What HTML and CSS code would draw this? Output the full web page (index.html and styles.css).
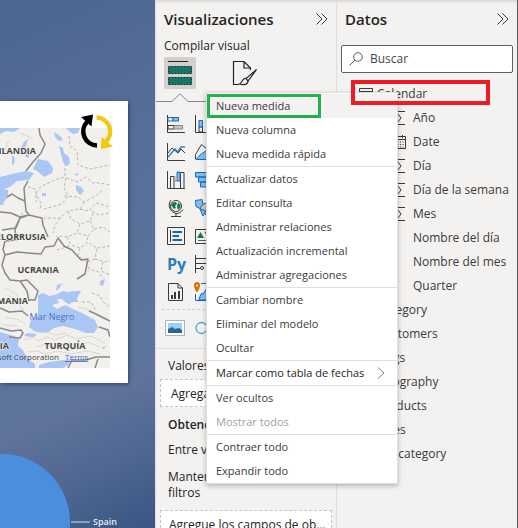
FILE: index.html
```html
<!DOCTYPE html>
<html lang="es">
<head>
<meta charset="utf-8">
<title>Informe</title>
<link rel="stylesheet" href="styles.css">
</head>
<body>
<main class="app">
  <section class="report" aria-label="Lienzo del informe">
    <div class="map-card">
      <svg class="map" viewBox="0 0 110 240" preserveAspectRatio="xMaxYMid slice" role="img" aria-label="Mapa">
        <rect width="110" height="240" fill="#f1f0ed"/>
        <g fill="#a9c6f5">
          <path d="M0 0H20L14 4 6 3 0 6ZM66 0H80L78 5 73 6 69 3Z"/>
          <path d="M24 14l4-3-2 6-3 4-4 2ZM12 27l3 3-1 6-2 1ZM28 22l3 3-3 5-3-2ZM54 4l6 4 3 4-4 1-4-4ZM59 18l4 2 1 5 5 4 1 6-3 3-4-4-2-8ZM38 31l10 2 5 7-1 5-8 4-7-6-4-2ZM0 49l12-3 14-3 8 2-5 7-12 1-7 6-10 3ZM0 60l8 2 0 7-5 6 1 2-4 0ZM75 45l4 1-3 2ZM76 57l5 2 3 4-4 4-4-5ZM42 65l4 0 0 3-4 0ZM20 86l3-1 0 2ZM100 153l5-2-2 7-3-1ZM57 157l7-2-3 2-3 5-2 0Z"/>
          <path d="M38 167l5-2 6 3 6-1 8-4 5 1 8-1 5 0-4 7 1 4-6 0-5 4 4 2 11 5 13 7 3 7-4 6-8 0-11-4-12-3-9 2-7 5-11-1-7-5 2-7 7-5 0-8Z"/>
          <path d="M0 204l14 4 5 3-1 7 5 4 4 8 8 6 0 4H0ZM27 205l10 1-3 3-10-1ZM39 237l10-3 22-3-3 6-5 3-24 0ZM101 220l5-2-2 3Z"/>
        </g>
        <path d="M52 177l7-2-2-4 5 0 3 3 5 3-7 1-6 3Z" fill="#f1f0ed"/>
        <g fill="none" stroke="#d9d7d2" stroke-width="1">
          <path d="M24 212l8-3 6 4 9-4 8 3 12-5 10 4 14-3 14 7M36 219l9-3 9 3 14-4 9 4 11-5 12 5M28 224l9-1 8 3 13-3 12 3 18-3 12 3M5 160l10 5 8 9M10 168l8 6 6 9M5 190l12 1 9 5M3 197l15 1M78 179l12 3 11 8 9 3M28 15l-7 13M9 12l-5 12M20 5l13 6M43 203l12 4 12-2"/>
        </g>
        <g fill="none" stroke="#bbb8b4" stroke-width="1" stroke-dasharray="3 2">
          <path d="M69 8l1 10 7 5 1 14 12 4 10-2 10-2M65 35v14l-10 3-15 7-4 6 0 9M28 59l7 2 2 7 4 7-1 7M66 50l12 4 8-5 7 6 7 0 10 2M66 50l-2 10 4 8-6 8-18 5M64 68l14 1 6 5 10-5 9-7M84 74l-4 7-12 2-8 7-16 0M80 81l9 2 7-8 14 4M60 90l-5 7-2 8M68 83l3 8 9 5 10-3 4-10M80 96l-3 9-10 4-11-1M90 93l4 8-6 7-11-3M94 101l9-2 7 5M67 109l4 8 9 3 7-5 1-7M57 122l6-2 8-3M80 120l-2 8 9 6 8-3 2-11-8-5M87 134l2 7 10 3 4 7M97 120l13-2M95 131l10 3 5-2M103 134l-2 9 9 4M92 165l8 3 4 7 6 4M82 174l9 0 5 9M92 83l7 4 11-2"/>
        </g>
        <g fill="none" stroke="#8b8885" stroke-width="1.5" stroke-linejoin="round">
          <path d="M39 0l1 7 5 9-4 9-8 9-7 9M28 53l-4 7 1 13 1 10 3 4M7 69l5-3 6 4 7 3M0 84l11 1 9 4 9-2 8 2 5 1 1 7 5 12M29 87l-9 3-4 10-14 2M20 90l-5 10 1 12-11 1M5 113l-2 8 2 6 12-3 11 1 13 1 4-7 9-1 4-8 6 8 8 4 9 10 7-1-1 5-2 10-8 5M5 127l-3 10 3 8 5 7 10 1 7-1 6 6 5 5-3 9-6 0M20 153l7 10 2 10M0 180l9 4 13-1 6 5M0 200l11 3 10-1 2 3-3 5-11-1M89 183l7 3 14 7M99 199l9 3 2 7M110 229l-14 0-10 3-14 0-4 8M95 240l3-9"/>
        </g>
        <g class="map-country">
          <text x="36" y="26" text-anchor="end">FINLANDIA</text>
          <text x="46" y="112" text-anchor="end">BIELORRUSIA</text>
          <text x="38" y="145" text-anchor="middle">UCRANIA</text>
          <text x="28" y="176" text-anchor="end">RUMANIA</text>
          <text x="9" y="221" text-anchor="end">GRECIA</text>
          <text x="65" y="221" text-anchor="middle">TURQUÍA</text>
        </g>
        <text class="map-sea" x="52" y="192" text-anchor="middle">Mar Negro</text>
        <text class="map-credit" x="59" y="232" text-anchor="end">© 2023 Microsoft Corporation</text>
        <a href="#terms"><text class="map-terms" x="65" y="232">Terms</text></a>
      </svg>
      <svg class="refresh" viewBox="0 0 36 36" aria-hidden="true">
        <path d="M18 31.500A14 14 0 0 1 8.500 7.500" fill="none" stroke="#000" stroke-width="4.500"/>
        <path d="M2 3L14 .5 12.500 12.500Z" fill="#000"/>
        <path d="M17.500 3.500A14 14 0 0 1 27 27.500" fill="none" stroke="#f2c811" stroke-width="4.500"/>
        <path d="M22.500 23L34 32.500 22 35Z" fill="#f2c811"/>
      </svg>
    </div>
    <figure class="pie">
      <svg class="pie-shape" viewBox="0 0 71 74" aria-hidden="true"><circle cx="2" cy="68" r="68" fill="#4a8edd"/></svg>
      <figcaption class="pie-label">Spain</figcaption>
    </figure>
  </section>

  <section class="panel vis">
    <header class="panel-head">
      <h2>Visualizaciones</h2>
      <button class="icon-btn" aria-label="Contraer visualizaciones"><svg width="12" height="12" viewBox="0 0 12 12"><path d="M.5.5L6 6 .5 11.500M5.500.5L11 6l-5.500 5.500"/></svg></button>
    </header>
    <h3 class="sub">Compilar visual</h3>
    <div class="tabs">
      <button class="tab active" aria-label="Compilar visual">
        <svg width="24" height="24" viewBox="0 0 24 24"><path d="M0 .5H20" stroke="#252423"/><rect x="0.500" y="5.500" width="23" height="7" fill="#117865" stroke="#252423" stroke-dasharray="2 1"/><rect x="0.500" y="16.500" width="23" height="7" fill="#117865" stroke="#252423" stroke-dasharray="2 1"/></svg>
      </button>
      <button class="tab" aria-label="Dar formato">
        <svg width="26" height="26" viewBox="0 0 26 26" fill="none" stroke="#252423" stroke-width="1.200"><path d="M7 24.500H1.500V1.500H12L18.500 8v2M12 1.500V8h6.500"/><path d="M24.500 9.500L14 18.500l2 2.500ZM14 18.500c-4-1-3 4-6.500 5.500 4 1 8.500 1 8.500-3Z"/></svg>
      </button>
    </div>
    <svg class="notch" viewBox="0 0 180 9" preserveAspectRatio="xMinYMid slice" aria-hidden="true"><path d="M0 8.500H16L24 .8 32 8.500H180" fill="none" stroke="#8a8886"/></svg>
    <div class="gallery">
      <button aria-label="Barras apiladas"><svg viewBox="0 0 18 18"><path class="k" d="M.5 0V17.500H18"/><path class="b" d="M1 2.500H6V6H1Z" fill="#fff"/><path class="b f" d="M6 2.500H11.500V6H6Z"/><path class="k" d="M1 10.500H7V14H1Z"/><path d="M7 10.500H15.500V14H7Z" fill="#c8c6c4" stroke="#8a8886"/></svg></button>
      <button aria-label="Columnas apiladas"><svg viewBox="0 0 18 18"><path class="k" d="M.5 0V17.500H18M4 12h3.500v5H4Z"/><path class="b f" d="M4 5.500H7.500V12H4Z"/><path class="b f" d="M12 3.500h3v8h-3Z"/></svg></button>
      <button aria-label="Líneas"><svg viewBox="0 0 18 18"><path class="k" d="M.5 0V17.500H18"/><path d="M1 14L8 6l3 3 3-5h4" stroke="#2b88d8" fill="none" stroke-width="1.500"/><path class="k" d="M1 10L5 5l6 5 3-4 4 4"/></svg></button>
      <button aria-label="Áreas"><svg viewBox="0 0 18 18"><path class="b f" d="M1 16.500L5 12l7-5v9.500Z"/><path class="k" d="M.5 11.500L6.500 1.500 13 7"/><path class="k" d="M.5 11.500V16"/></svg></button>
      <button aria-label="Cascada"><svg viewBox="0 0 18 18"><path class="k" d="M.5 0V17.500H18M3.500 17V5.500H7V17M13.500 17V1.500H17V17"/><path class="b f" d="M10 4.500V1h3V10h-3Z"/><path d="M7 5v5h3V5" fill="#c8c6c4" stroke="#8a8886"/></svg></button>
      <button aria-label="Embudo"><svg viewBox="0 0 18 18"><path class="b f" d="M.5 1.500H17V6H.5ZM3.500 6H15v5H3.500ZM5.500 11H13v5H5.500Z"/></svg></button>
      <button aria-label="Mapa"><svg viewBox="0 0 18 18"><circle cx="9" cy="7" r="5.500" class="k"/><path d="M6 3.500L9 3l1 2-2 2 1 2-2 1-3-4ZM11 3.500l2.500 2v3L11 11l-1-3Z" fill="#107c41"/><path class="k" d="M4 1C0 6 3 13 9 14.500c3 0 5-1 7-4M9 14.500V17M4 17.500H14"/></svg></button>
      <button aria-label="Mapa coroplético"><svg viewBox="0 0 18 18"><path class="b f" d="M.5 1.500L7 .5l1 5-3 4-4-2Z"/><path d="M8 5l8-2v8l-5 5-6-7Z" fill="#c8c6c4" stroke="#605e5c"/><path class="b f" d="M5 10l6 2-3 5Z"/></svg></button>
      <button aria-label="Segmentación"><svg viewBox="0 0 18 18"><path class="k" d="M.5.500H17.500V17.500H.5Z"/><path class="k" d="M3.500 3v12"/><path d="M5.500 5H15M5.500 9H12M5.500 13H15" stroke="#0f6cbd" stroke-width="2"/></svg></button>
      <button aria-label="KPI"><svg viewBox="0 0 18 18"><path class="k" d="M.5 2.500H17.500V16.500H.5Z"/><path d="M5.500 5L9 11H2Z" fill="#107c41"/><path d="M9.500 5h5L12 9Z" fill="#d13438"/><path d="M3 13.500H15" stroke="#605e5c"/></svg></button>
      <button class="py">Py</button>
      <button aria-label="Influenciadores clave"><svg viewBox="0 0 18 18"><path class="k" d="M.5 0V18M1 3.500H17M1 8.500H12M1 13.500H5"/><circle cx="7" cy="13" r="1.500" class="k"/><circle cx="13" cy="8.500" r="1.500" class="k"/></svg></button>
      <button aria-label="Informe paginado"><svg viewBox="0 0 18 18"><path class="k" d="M1.500.500H11L15.500 5V17.500H1.500ZM11 .5V5h4.500"/><path d="M5 16v-4M8 16V9M12 16V8" stroke="#3b3a39" stroke-width="2"/></svg></button>
      <button aria-label="ArcGIS"><svg viewBox="0 0 18 18"><path class="b f" d="M4 16l2-5 3-1 3-5h5v12H4Z"/><path class="b" d="M6 .5h11.500v17H.5V11"/><path d="M2-1a3 3 0 0 1 3 3.500c0 3-3 7-3 7s-3-4-3-7A3 3 0 0 1 2-1Z" fill="#d66f00"/><circle cx="2" cy="2.500" r="1" fill="#fff"/></svg></button>
    </div>
    <div class="gallery custom">
      <button aria-label="Imagen"><svg class="wide" viewBox="0 0 20 16"><path d="M.5.500H19.500V15.500H.5Z" fill="#fff" stroke="#a6b4c6"/><path d="M3 3H17V13H3Z" fill="#9ed0f8"/><path d="M3 9l4-2 3 2 4-1 3 2v3H3Z" fill="#2a6599"/></svg></button>
      <button aria-label="Anillo"><svg viewBox="0 0 18 18"><circle cx="6.500" cy="9" r="5.500" fill="none" stroke="#4aa9c4" stroke-width="1.300"/></svg></button>
    </div>
    <div class="wells">
      <p>Valores</p>
      <div class="well">Agregar campos</div>
      <h3>Obtener detalles</h3>
      <p>Entre varios informes</p>
      <div class="keep"><label for="keep">Mantener todos los filtros</label><input id="keep" type="checkbox" role="switch" checked></div>
      <div class="well drill">Agregue los campos de ob...</div>
    </div>
  </section>

  <section class="panel data">
    <header class="panel-head">
      <h2>Datos</h2>
      <button class="icon-btn" aria-label="Contraer datos"><svg width="12" height="12" viewBox="0 0 12 12"><path d="M.5.500L6 6 .5 11.500M5.500.500L11 6l-5.500 5.500"/></svg></button>
    </header>
    <label class="search">
      <svg width="14" height="14" viewBox="0 0 14 14" aria-hidden="true"><circle cx="9" cy="5" r="4.300"/><path d="M6 8L.5 13.500"/></svg>
      <input type="text" placeholder="Buscar" aria-label="Buscar">
    </label>
    <ul class="tree">
      <li class="table"><svg class="chev" viewBox="0 0 10 14"><path d="M1.500 5L5 8.500 8.500 5"/></svg><svg viewBox="0 0 14 14"><path d="M.5 1.500H13.500V12.500H.5ZM.5 4.500H13.500M.5 8.500H13.500M5 4.500V12.500M9 4.500V12.500"/></svg>Calendar</li>
      <li><svg viewBox="0 0 14 14"><path d="M13 .5H4L9 7l-5 6.500H13"/></svg>Año</li>
      <li><svg viewBox="0 0 14 14"><path d="M1 1.500H13.500V13.500H1ZM1 4.500H13.500M10.500 0V3M4 0V3"/><path d="M3 7H12M3 9.500H12M3 12H12" stroke-dasharray="1 1.500"/></svg>Date</li>
      <li><svg viewBox="0 0 14 14"><path d="M13 .5H4L9 7l-5 6.500H13"/></svg>Día</li>
      <li><svg viewBox="0 0 14 14"><path d="M13 .5H4L9 7l-5 6.500H13"/></svg>Día de la semana</li>
      <li><svg viewBox="0 0 14 14"><path d="M13 .5H4L9 7l-5 6.500H13"/></svg>Mes</li>
      <li>Nombre del día</li>
      <li>Nombre del mes</li>
      <li>Quarter</li>
      <li class="table">Category</li>
      <li class="table">Customers</li>
      <li class="table">Flags</li>
      <li class="table">Geography</li>
      <li class="table">Products</li>
      <li class="table">Sales</li>
      <li class="table">Subcategory</li>
    </ul>
  </section>

  <div class="menu" role="menu">
    <button role="menuitem" class="hover">Nueva medida</button>
    <button role="menuitem">Nueva columna</button>
    <button role="menuitem">Nueva medida rápida</button>
    <hr>
    <button role="menuitem">Actualizar datos</button>
    <button role="menuitem">Editar consulta</button>
    <button role="menuitem">Administrar relaciones</button>
    <button role="menuitem">Actualización incremental</button>
    <button role="menuitem">Administrar agregaciones</button>
    <hr>
    <button role="menuitem">Cambiar nombre</button>
    <button role="menuitem">Eliminar del modelo</button>
    <button role="menuitem">Ocultar</button>
    <hr>
    <button role="menuitem" class="strong">Marcar como tabla de fechas<svg width="8" height="12" viewBox="0 0 8 12" aria-hidden="true"><path d="M1 .5L7 6l-6 5.500"/></svg></button>
    <hr>
    <button role="menuitem">Ver ocultos</button>
    <button role="menuitem" disabled>Mostrar todos</button>
    <hr>
    <button role="menuitem">Contraer todo</button>
    <button role="menuitem">Expandir todo</button>
    <div class="mark-green"></div>
  </div>
  <div class="mark-red"></div>
</main>
</body>
</html>
```

FILE: styles.css
```css
* { box-sizing: border-box; }

body {
  margin: 0;
  font: 12px/16px "Open Sans", "Noto Sans", sans-serif;
  color: #252423;
}

h2, h3, p, ul, figure { margin: 0; padding: 0; font-size: 12px; font-weight: 400; }

button {
  font: inherit;
  color: inherit;
  background: none;
  border: 0;
  padding: 0;
}

.app {
  position: relative;
  display: grid;
  grid-template-columns: minmax(0, 1fr) 181px 182px;
  height: 100vh;
  overflow: hidden;
}

/* Report canvas */
.report {
  padding-top: 101px;
  overflow: hidden;
  background: linear-gradient(155deg, #4c6591 0%, #566d98 30%, #5d759c 68%, #5f739c 74%, #4c658f 88%, #3a5584 100%);
}

.map-card {
  position: relative;
  margin-right: 27px;
  padding: 27px 18px 15px 0;
  background: #fff;
  box-shadow: 1px 1px 4px rgba(20, 35, 70, .6);
}

.map { display: block; width: 100%; height: 240px; }
.map-country { font-size: 9px; font-weight: 700; fill: #484644; paint-order: stroke; stroke: #f6f5f2; stroke-width: 1px; }
.map-sea { font-size: 9px; fill: #4a72c4; }
.map-credit { font-size: 8px; fill: #444; }
.map-terms { font-size: 8px; fill: #3f67c4; text-decoration: underline; }

.refresh { position: absolute; top: 13px; right: 13px; width: 36px; height: 36px; }

.pie { display: flex; align-items: flex-end; margin-top: 71px; }
.pie-shape { width: 71px; height: 74px; flex: none; }
.pie-label {
  display: flex;
  align-items: center;
  gap: 3px;
  font-size: 9px;
  font-weight: 600;
  line-height: 12px;
  color: #e8ebf2;
}
.pie-label::before { content: ""; width: 19px; height: 2px; background: #8c9cbd; }

/* Side panels */
.panel {
  min-width: 0;
  overflow: hidden;
  background: #f3f2f1;
  border-left: 1px solid #e1dfdd;
  box-shadow: inset 0 3px 2px -1px #dcdad8;
}

.panel-head {
  display: flex;
  align-items: center;
  justify-content: space-between;
  height: 38px;
  padding: 0 8px;
}
.panel-head h2 { font-size: 15px; line-height: 20px; font-weight: 600; }
.icon-btn { display: flex; }
.icon-btn path { fill: none; stroke: #3b3a39; }

.sub { padding: 0 8px; font-weight: 500; }

.tabs { display: flex; gap: 33px; padding: 3px 8px 4px; }
.tab { display: grid; place-items: center; width: 32px; height: 32px; }
.tab.active { background: #d2d0ce; border-radius: 2px; }

.notch { display: block; width: 100%; height: 9px; }

.gallery {
  display: grid;
  grid-template-columns: repeat(2, 18px);
  gap: 10px;
  margin: 0 6px;
  padding: 13px 5px 8px;
  border-bottom: 1px dashed #d2d0ce;
}
.gallery button { display: grid; place-items: center; width: 18px; height: 18px; }
.gallery svg { width: 18px; height: 18px; overflow: visible; }
.gallery .wide { width: 20px; height: 16px; }
.gallery .k { fill: none; stroke: #3b3a39; }
.gallery .b { fill: none; stroke: #0f6cbd; }
.gallery .f { fill: #83bdf0; }
.gallery .py { font-size: 16px; font-weight: 700; color: #2a80bd; }
.gallery.custom {
  grid-template-columns: 20px 18px;
  margin: 0;
  padding: 9px 9px 11px;
  border-bottom: 1px solid #e1dfdd;
}
.custom button { width: auto; }

.wells { padding: 9px 4px 0; }
.wells p, .wells h3, .keep { padding: 0 8px; }
.wells h3 { margin: 10px 0 9px; font-weight: 600; }
.well {
  height: 28px;
  margin-top: 5px;
  padding: 0 10px;
  line-height: 28px;
  background: #fff;
  border: 1px dashed #c8c6c4;
  white-space: nowrap;
  overflow: hidden;
}
.keep { display: flex; justify-content: space-between; margin-top: 11px; }
.keep label { width: 116px; }
.keep input {
  appearance: none;
  width: 24px;
  height: 12px;
  margin: 3px 0 0;
  border-radius: 6px;
  background: #484644;
}
.drill { margin-top: 9px; padding: 0 8px; }

/* Data panel */
.data { border-right: 1px solid #605e5c; }

.search {
  display: flex;
  align-items: center;
  gap: 7px;
  height: 28px;
  margin: 7px 4px 9px;
  padding: 0 7px;
  background: #fff;
  border: 1px solid #605e5c;
  border-radius: 2px;
}
.search svg { flex: none; fill: none; stroke: #605e5c; }
.search input {
  min-width: 0;
  flex: 1;
  padding: 0;
  border: 0;
  background: none;
  font: inherit;
}
.search input::placeholder { color: #484644; opacity: 1; }

.tree { list-style: none; color: #3b3a39; }
.tree li {
  display: flex;
  align-items: center;
  gap: 7px;
  height: 24px;
  padding-left: 76px;
  white-space: nowrap;
}
.tree li:has(svg) { padding-left: 55px; }
.tree li.table { padding-left: 40px; }
.tree li.table:has(svg) { padding-left: 8px; gap: 4px; }
.tree svg { flex: none; width: 14px; height: 14px; fill: none; stroke: #3b3a39; }
.tree .chev { width: 10px; }

/* Context menu */
.menu {
  position: absolute;
  top: 92px;
  right: 120px;
  width: 192px;
  padding: 1px 0 0;
  font-size: 11px;
  background: #fff;
  border: 1px solid #e1dfdd;
  box-shadow: 0 2px 5px rgba(0, 0, 0, .25);
  color: #3b3a39;
}
.menu button {
  display: flex;
  align-items: center;
  justify-content: space-between;
  width: 100%;
  height: 24px;
  padding: 0 12px 0 9px;
  white-space: nowrap;
}
.menu .hover { background: #f3f2f1; }
.menu .strong { color: #252423; }
.menu button:disabled { color: #a19f9d; }
.menu svg { fill: none; stroke: #6b8093; }
.menu hr { height: 1px; margin: 0; border: 0; background: #e1dfdd; }

/* Annotation frames */
.mark-green, .mark-red { position: absolute; pointer-events: none; }
.mark-green { top: 1px; left: 0; width: 114px; height: 24px; border: 3px solid #22b14c; }
.mark-red { top: 80px; right: 28px; width: 139px; height: 25px; border: 4px solid #ed1c24; }
```
